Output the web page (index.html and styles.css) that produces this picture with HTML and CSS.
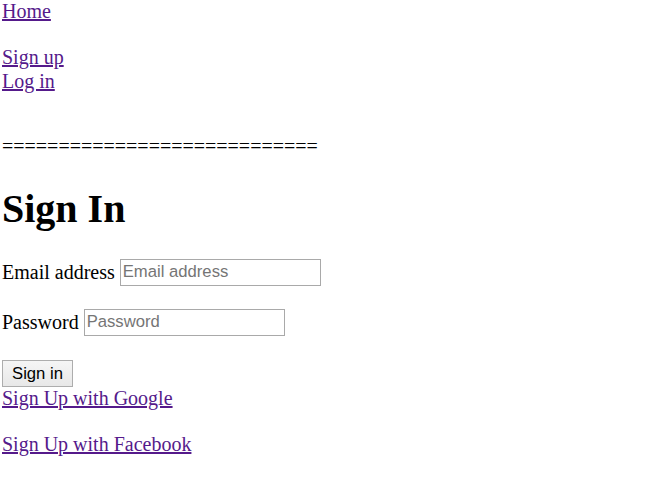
FILE: index.html
```html
<!DOCTYPE html>
<html lang="en">
<head>
<meta charset="utf-8">
<title>Sign In</title>
<link rel="stylesheet" href="styles.css">
</head>
<body>
<nav class="nav">
  <a class="nav-home" href="#">Home</a>
  <div class="nav-auth">
    <a href="#">Sign up</a>
    <a href="#">Log in</a>
  </div>
</nav>
<div class="divider">============================</div>
<h1 class="title">Sign In</h1>
<form class="form">
  <p class="row"><label for="email">Email address</label> <input class="field" id="email" type="email" placeholder="Email address"></p>
  <p class="row"><label for="password">Password</label> <input class="field" id="password" type="password" placeholder="Password"></p>
  <div class="actions"><button class="btn" type="button">Sign in</button></div>
</form>
<div class="social">
  <a href="#">Sign Up with Google</a>
  <a href="#">Sign Up with Facebook</a>
</div>
</body>
</html>
```
FILE: styles.css
```css
html, body {
  background: #ffffff;
}
body {
  margin: 0;
  padding: 0 0 0 2px;
  font-family: "Liberation Serif", "Times New Roman", serif;
  font-size: 20px;
  line-height: 23px;
  color: #000000;
}
a {
  color: #551a8b;
  text-decoration: underline;
}
.nav {
  display: flex;
  flex-direction: column;
  align-items: flex-start;
}
.nav-home {
  margin-bottom: 23px;
}
.nav-auth {
  display: flex;
  flex-direction: column;
  align-items: flex-start;
  gap: 1px;
}
.divider {
  margin-top: 42px;
  letter-spacing: 0;
}
.title {
  font-size: 40px;
  line-height: 46px;
  font-weight: bold;
  margin: 28px 0 25px;
}
.form {
  margin: 0;
}
.row {
  margin: 0 0 20px;
  height: 30px;
  display: flex;
  align-items: center;
  gap: 5px;
}
.field {
  box-sizing: border-box;
  width: 201px;
  height: 27px;
  margin: 0;
  padding: 1px 2px;
  border: 1px solid #a9a9a9;
  border-radius: 0;
  font-family: "Liberation Sans", Arial, sans-serif;
  font-size: 16.67px;
  color: #000;
  background: #fff;
}
.field::placeholder {
  color: #757575;
}
.actions {
  padding-top: 3px;
  height: 27px;
}
.btn {
  box-sizing: border-box;
  width: 71px;
  height: 27px;
  margin: 0;
  padding: 0;
  border: 1px solid #adadad;
  border-radius: 0;
  background: linear-gradient(#f5f5f5, #e8e8e8);
  font-family: "Liberation Sans", Arial, sans-serif;
  font-size: 16.67px;
  color: #000;
}
.social {
  display: flex;
  flex-direction: column;
  align-items: flex-start;
  gap: 23px;
}
```
